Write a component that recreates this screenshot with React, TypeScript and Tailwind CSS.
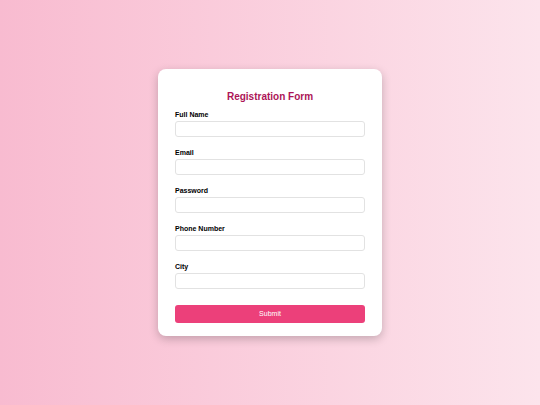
import React from 'react';

const fields = ['Full Name', 'Email', 'Password', 'Phone Number', 'City'];

const App: React.FC = () => {
    return (
        <div className="min-h-screen w-full flex items-center justify-center bg-gradient-to-r from-[#f8bbd0] to-[#fce4ec] font-['Liberation_Sans',Arial,sans-serif]">
            <form
                className="w-[224px] bg-white rounded-[8px] shadow-[0_3px_10px_rgba(0,0,0,0.22)] px-[17px] pt-[20px] pb-[13px]"
                onSubmit={e => e.preventDefault()}
            >
                <h2 className="text-[10px] font-bold text-center text-[#ad1457] mb-[7px]">Registration Form</h2>
                {fields.map(label => (
                    <div key={label} className="mb-[12px]">
                        <label className="block text-[7px] leading-[8px] font-bold text-black mb-[2px]">{label}</label>
                        <input
                            type={label === 'Password' ? 'password' : 'text'}
                            className="block w-full h-[16px] border border-[#e2e2e2] rounded-[3px] bg-white outline-none"
                        />
                    </div>
                ))}
                <button
                    type="submit"
                    className="block w-full h-[18px] mt-[16px] rounded-[3px] bg-[#ec407a] text-white text-[7px]"
                >
                    Submit
                </button>
            </form>
        </div>
    );
};

export default App;
